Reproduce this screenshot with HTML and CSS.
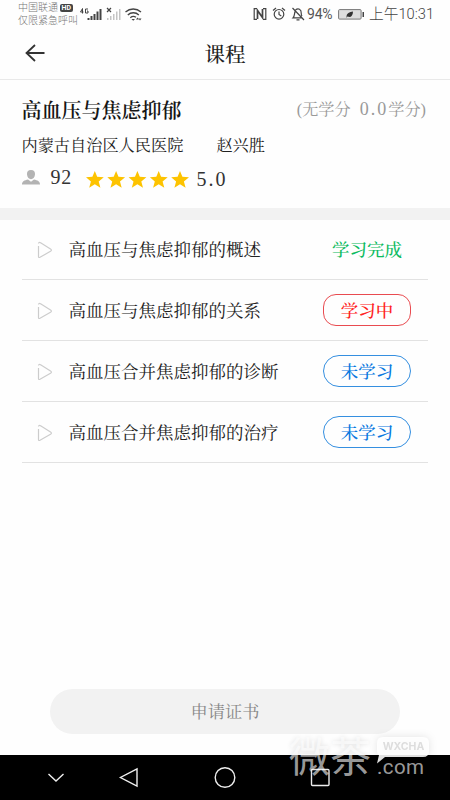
FILE: index.html
```html
<!DOCTYPE html>
<html lang="zh-CN">
<head>
<meta charset="utf-8">
<title>课程</title>
<link rel="stylesheet" href="styles.css">
</head>
<body>
<div class="status">
  <div class="carrier"><div>中国联通<span class="hd">HD</span></div><div>仅限紧急呼叫</div></div>
  <svg class="signals" width="64" height="18" viewBox="0 0 64 18">
    <g fill="none" stroke="#444" stroke-width="1"><path d="M3.500 8.500V3.500L1.500 7h3M9 4H6.500v4H9V6H8"/></g>
    <path d="M8.500 13h2v2h-2zM11.500 11h2v4h-2zM14.500 9h2v6h-2zM17.500 6.500h2V15h-2zM20.500 4h2v11h-2z" fill="#444"/>
    <path d="m28 3 4 4m0-4-4 4" stroke="#444" stroke-width="1.200"/>
    <path d="M28 13h1.500v2H28zM31 11h1.500v4H31zM34 9h1.500v6H34zM37 6.500h1.500V15H37zM40 4h1.500v11H40z" fill="#c4c4c4"/>
    <g fill="none" stroke="#444" stroke-width="1.300"><path d="M46.500 7c4.500-4 11-4 15.500 0M48.800 10c3-3 8-3 11 0M51.300 12.700c1.800-1.500 4-1.500 5.700-.4"/></g>
    <path d="m52.500 14 1.700 1.700L56 14zM58.500 12.500l-1.500 2h3zM61 15.500l-1.500-2h3z" fill="#444"/>
  </svg>
  <svg class="sysicons" width="54" height="16" viewBox="0 0 54 16" fill="none" stroke="#444" stroke-width="1.200">
    <path d="M4 2.700H1.200v10.600H4M10 2.700h2.800v10.600H10"/><path d="M4.500 13V4.500l5 7V3" stroke-width="1.700"/>
    <circle cx="26" cy="8.300" r="4.800"/><path d="M26 5.500v3l2.300 1.500M20 4.500l3-2.500M32 4.500l-3-2.500"/>
    <path d="M42 5.500c-.8 3-.3 4.600-2 6.300h9.500M42.500 4c2.700-2.500 6-.7 5.700 3 0 1.500.2 2.500.8 3.200M39.500 2l11.500 12M43.500 13.800h3"/>
  </svg>
  <span class="pct">94%</span>
  <svg class="battery" width="27" height="13" viewBox="0 0 27 13"><rect x=".6" y="1.600" width="22.500" height="9.500" rx="1" fill="#ddd" stroke="#777"/><path d="M24.500 4H26v5h-1.500z" fill="#444"/><path d="M8.500 9c0-4 3-5 6.500-5.500C15 8 12.500 10 9.500 8.500L8 10z" fill="#333"/></svg>
  <span class="time">上午10:31</span>
</div>
<header class="bar">
  <svg width="20" height="18" viewBox="0 0 20 18" fill="none" stroke="#333" stroke-width="1.800"><path d="M19.500 9H1.500M10 1 1.500 9l8.500 8"/></svg>
  <h1>课程</h1>
</header>
<section class="course">
  <div class="title-line"><h2>高血压与焦虑抑郁</h2><span class="credit">(无学分<i></i><span class="num">0.0</span>学分)</span></div>
  <div class="people"><span>内蒙古自治区人民医院</span><span>赵兴胜</span></div>
  <div class="rating">
    <svg width="18" height="15" viewBox="0 0 18 15" fill="#b3b3b3"><path d="M9 0c3 0 4.300 2 4 4.600-.3 2.800-2 4.700-4 4.700S5.300 7.400 5 4.600C4.700 2 6 0 9 0zM0 14.500c0-3.500 2.500-4 6-5l3 2.200 3-2.200c3.500 1 6 1.500 6 5z"/></svg>
    <span class="count">92</span>
    <svg class="stars" width="103" height="17" viewBox="0 0 103 17" fill="#fdc300"><defs><path id="star" d="m8.800 0 2.400 5.800 6.600.4-5.100 4.200 1.700 6.300-5.600-3.500-5.600 3.500 1.700-6.300L0 6.200l6.400-.4z"/></defs><use href="#star"/><use href="#star" x="21.300"/><use href="#star" x="42.600"/><use href="#star" x="63.900"/><use href="#star" x="85.200"/></svg>
    <span class="score">5.0</span>
  </div>
</section>
<main class="lessons">
  <div class="lesson"><svg class="play" viewBox="0 0 16 18"><path d="M1.500 5v10.500q0 1.500 1.500.8l10.500-6q1.800-1.200 0-2.300L4 2Q1.500.7 1.500 2.500"/></svg><span class="name">高血压与焦虑抑郁的概述</span><span class="state done">学习完成</span></div>
  <div class="lesson"><svg class="play" viewBox="0 0 16 18"><path d="M1.500 5v10.500q0 1.500 1.500.8l10.500-6q1.800-1.200 0-2.300L4 2Q1.500.7 1.500 2.500"/></svg><span class="name">高血压与焦虑抑郁的关系</span><span class="state active">学习中</span></div>
  <div class="lesson"><svg class="play" viewBox="0 0 16 18"><path d="M1.500 5v10.500q0 1.500 1.500.8l10.500-6q1.800-1.200 0-2.300L4 2Q1.500.7 1.500 2.500"/></svg><span class="name">高血压合并焦虑抑郁的诊断</span><span class="state todo">未学习</span></div>
  <div class="lesson"><svg class="play" viewBox="0 0 16 18"><path d="M1.500 5v10.500q0 1.500 1.500.8l10.500-6q1.800-1.200 0-2.300L4 2Q1.500.7 1.500 2.500"/></svg><span class="name">高血压合并焦虑抑郁的治疗</span><span class="state todo">未学习</span></div>
</main>
<button class="apply">申请证书</button>
<nav class="nav">
  <svg width="450" height="45" viewBox="0 0 450 45" fill="none" stroke="#eee" stroke-width="1.400"><path d="m48.500 19 7.500 7 7.500-7M137 14v17l-16.500-8.500z"/><circle cx="225" cy="22.500" r="9.800"/><rect x="311.500" y="14.500" width="17.500" height="16" rx="1"/></svg>
</nav>
<div class="mark">
  <span class="mark-cn">微茶</span>
  <div class="mark-side">
    <div class="bubble"><svg width="53" height="27" viewBox="0 0 53 27"><path d="M6 0h40q6 0 6 6v8q0 6-6 6H8l-8 6.500L2 18q-2-1-2-4V6q0-6 6-6z" fill="#fff" fill-opacity=".88"/></svg><span>WXCHA</span></div>
    <span class="com">.com</span>
  </div>
</div>
</body>
</html>
```
FILE: styles.css
```css
* { box-sizing: border-box; }
body {
  margin: 0;
  width: 450px;
  height: 800px;
  overflow: hidden;
  position: relative;
  display: flex;
  flex-direction: column;
  background: #fefefe;
  color: #222;
  font-family: "Noto Serif CJK SC", "Noto Serif SC", "Noto Sans CJK SC", serif;
}
svg { display: block; flex: none; }
h1, h2 { margin: 0; }
span { white-space: nowrap; }

.status {
  height: 28px;
  flex: none;
  display: flex;
  align-items: center;
  padding-left: 18px;
  color: #555;
  font-family: Roboto, "Noto Sans CJK SC", sans-serif;
}
.carrier { width: 61px; padding-top: 1px; font-size: 10px; line-height: 12.500px; color: #777; font-weight: 300; white-space: nowrap; }
.hd { margin-left: 2px; padding: 0 1.500px; border-radius: 2px; background: #444; color: #fff; font-size: 7px; font-weight: 700; vertical-align: 1px; line-height: 8px; display: inline-block; }
.sysicons { margin-left: 110px; }
.pct { width: 31px; margin-left: 0; font-size: 14px; letter-spacing: -.2px; }
.time { height: 20px; margin: -1px 0 0 4px; font-size: 14.700px; line-height: 20px; font-weight: 300; color: #444; }

.bar { height: 52px; flex: none; display: flex; align-items: center; padding: 0 25px 1px; border-bottom: 1px solid #e9e9e9; }
.bar h1 { flex: 1; margin-right: 20px; text-align: center; font-size: 20.500px; line-height: 28px; font-weight: 500; }

.course { height: 140px; flex: none; padding: 16px 24px 0 21.500px; border-bottom: 12px solid #f2f2f2; }
.title-line { height: 28px; display: flex; align-items: center; justify-content: space-between; }
.title-line h2 { font-size: 20px; line-height: 28px; font-weight: 600; color: #151515; }
.credit { margin-top: -1px; font-size: 16.200px; line-height: 24px; color: #999; font-family: "Liberation Serif", "Noto Serif CJK SC", "Noto Sans CJK SC", serif; }
.credit i { display: inline-block; width: 9px; }
.num { font-size: 18px; letter-spacing: 2px; }
.people { height: 24px; margin-top: 8px; display: flex; gap: 33px; font-size: 16.200px; line-height: 24px; }
.rating { height: 28px; margin-top: 7px; display: flex; align-items: center; font-family: "Liberation Serif", serif; font-size: 20px; letter-spacing: .8px; color: #333; }
.count { width: 35px; margin-left: 11px; }
.stars { margin-top: 4px; }
.score { margin: 4px 0 0 8px; letter-spacing: 2px; }

.lessons { height: 244px; flex: none; margin: -1px 22px 0; display: grid; grid-template-rows: repeat(4, 61px); }
.lesson { display: flex; align-items: center; padding: 0 17px 0 15px; border-bottom: 1px solid #e2e2e2; }
.play { width: 16px; height: 18px; margin-top: 2px; fill: none; stroke: #ccc; stroke-width: 1.200; }
.name { flex: 1; margin-left: 15.500px; font-size: 17.500px; line-height: 26px; }
.state { width: 88px; height: 32px; display: flex; align-items: center; justify-content: center; border: 1px solid transparent; border-radius: 16px; font-size: 17.500px; line-height: 26px; font-weight: 500; }
.done { color: #0cbb61; }
.active { color: #f22; border-color: #e94b50; border-radius: 13px; }
.todo { padding-bottom: 1px; color: #0878df; border-color: #358fe0; }

.apply { width: 350px; height: 45px; flex: none; margin: 226px 0 0 50px; padding: 0 0 2px; border: 0; border-radius: 23px; background: #f2f2f2; color: #888; font-family: inherit; font-size: 17.300px; }
.nav { height: 45px; flex: none; margin-top: auto; background: #000; }

.mark { position: absolute; left: 289px; top: 734px; display: flex; color: rgba(255, 255, 255, .62); text-shadow: 0 0 5px rgba(0, 0, 0, .12); font-family: "Noto Sans CJK SC", sans-serif; }
.mark-cn { width: 82px; font-size: 41px; line-height: 41px; font-weight: 400; }
.mark-side { margin-left: 6px; display: flex; flex-direction: column; }
.bubble { width: 53px; height: 20px; margin-top: 3px; display: grid; filter: drop-shadow(0 0 4px rgba(0, 0, 0, .12)); }
.bubble > * { grid-area: 1 / 1; }
.bubble span { color: #ddd; text-align: center; font: 700 10.500px/20px Inter, sans-serif; text-shadow: none; }
.com { margin-top: 0; font-family: Roboto, sans-serif; font-size: 20.500px; line-height: 20px; letter-spacing: .4px; }
```
